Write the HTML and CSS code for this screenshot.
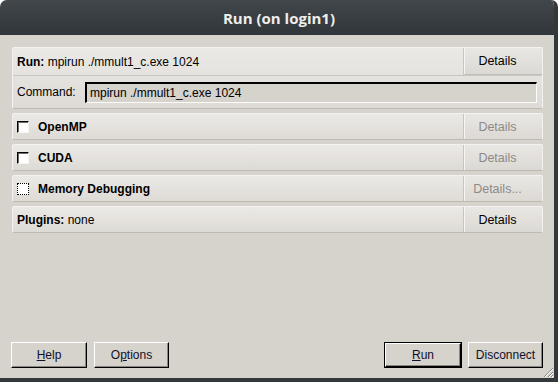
FILE: index.html
```html
<!DOCTYPE html>
<html>
<head>
<meta charset="utf-8">
<link rel="stylesheet" href="styles.css">
</head>
<body>
<div class="window">
  <div class="titlebar">Run (on login1)</div>
  <div class="body">
    <div class="panels">
      <div class="panel run-panel">
        <div class="row">
          <div class="label"><b>Run:</b> mpirun ./mmult1_c.exe 1024</div>
          <div class="details">Details</div>
        </div>
        <div class="command-row">
          <span class="cmd-label">Command:</span>
          <div class="input">mpirun ./mmult1_c.exe 1024</div>
        </div>
      </div>
      <div class="panel row">
        <div class="label"><span class="check"></span><b>OpenMP</b></div>
        <div class="details disabled">Details</div>
      </div>
      <div class="panel row">
        <div class="label"><span class="check"></span><b>CUDA</b></div>
        <div class="details disabled">Details</div>
      </div>
      <div class="panel row">
        <div class="label"><span class="check focus"></span><b>Memory Debugging</b></div>
        <div class="details disabled">Details...</div>
      </div>
      <div class="panel row">
        <div class="label"><b>Plugins:</b> none</div>
        <div class="details">Details</div>
      </div>
    </div>
    <div class="footer">
      <div class="group left">
        <div class="btn help"><u>H</u>elp</div>
        <div class="btn">O<u>p</u>tions</div>
      </div>
      <div class="group right">
        <div class="default"><div class="btn"><u>R</u>un</div></div>
        <div class="btn">Disconnect</div>
      </div>
    </div>
  </div>
  <svg class="grip" width="11" height="11" viewBox="0 0 11 11">
    <path d="M10 1 L1 10 M10 5 L5 10 M10 8 L8 10" stroke="#8a867f" stroke-width="1" fill="none"/>
    <path d="M10 2 L2 10 M10 6 L6 10 M10 9 L9 10" stroke="#ffffff" stroke-width="1" fill="none"/>
  </svg>
</div>
</body>
</html>
```

FILE: styles.css
```css
html, body {
  margin: 0;
  padding: 0;
  background: #ffffff;
}

.window {
  position: relative;
  width: 558px;
  height: 382px;
  box-sizing: border-box;
  border-right: 4px solid #33383a;
  border-bottom: 4px solid #33383a;
  border-radius: 7px 7px 0 0;
  background: #d6d2cc;
  display: flex;
  flex-direction: column;
  overflow: hidden;
  font-family: "Liberation Sans", Arial, sans-serif;
  font-size: 12px;
  color: #000;
}

.titlebar {
  height: 35px;
  flex: none;
  background: linear-gradient(#41474a, #2f3538);
  color: #eeeeec;
  font-family: "Open Sans", sans-serif;
  font-weight: bold;
  font-size: 15px;
  display: flex;
  align-items: center;
  justify-content: center;
  padding-left: 4px;
  box-sizing: border-box;
}

.body {
  flex: 1;
  display: flex;
  flex-direction: column;
  padding: 12px 11px 10px 12px;
}

.panels {
  display: flex;
  flex-direction: column;
  gap: 4px;
}

.panel {
  box-sizing: border-box;
  border: 1px solid #f3f2f0;
  border-bottom-color: #bdb9b3;
  border-radius: 2px;
  background: linear-gradient(#ebe9e6, #dedbd6);
}

.row {
  display: flex;
  align-items: stretch;
  height: 27px;
}

.run-panel {
  height: 62px;
}

.run-panel .row {
  height: 27px;
  border-bottom: 1px solid #c9c5bf;
}

.run-panel .row .details {
  border-bottom: 1px solid #c4c0ba;
}

.label {
  flex: 1;
  display: flex;
  align-items: center;
  padding-left: 4px;
  white-space: pre;
}

.details {
  width: 79px;
  box-sizing: border-box;
  border-left: 1px solid #c8c4be;
  box-shadow: inset 1px 0 #f6f5f3;
  background: linear-gradient(#e9e7e3, #dcd9d4);
  display: flex;
  align-items: center;
  justify-content: center;
  padding-right: 11px;
  font-size: 12.5px;
}

.details.disabled {
  color: #8c8a87;
}

.check {
  width: 12px;
  height: 12px;
  box-sizing: border-box;
  background: #fff;
  border-top: 1px solid #000;
  border-left: 1px solid #000;
  border-right: 1px solid #f4f4f4;
  border-bottom: 1px solid #f4f4f4;
  box-shadow: inset 1px 1px #6e6a64;
  margin-right: 9px;
  margin-top: 1px;
}

.check.focus {
  border: 1px dotted #000;
  box-shadow: none;
}

.command-row {
  display: flex;
  align-items: flex-start;
  padding: 6px 5px 0 4px;
}

.cmd-label {
  width: 68px;
  line-height: 21px;
}

.input {
  flex: 1;
  height: 21px;
  box-sizing: border-box;
  border-top: 2px solid #000;
  border-left: 2px solid #000;
  border-right: 1px solid #fbfbfa;
  border-bottom: 1px solid #fbfbfa;
  background: #d6d2cc;
  padding-left: 3px;
  line-height: 18px;
}

.footer {
  margin-top: auto;
  margin-left: -1px;
  display: flex;
  justify-content: space-between;
  align-items: flex-end;
}

.group {
  display: flex;
  align-items: flex-end;
}

.group.left {
  gap: 7px;
}

.group.right {
  gap: 6px;
}

.btn {
  width: 75px;
  height: 26px;
  box-sizing: border-box;
  border-top: 1px solid #ffffff;
  border-left: 1px solid #ffffff;
  border-right: 1px solid #000;
  border-bottom: 1px solid #000;
  box-shadow: inset -1px -1px #8a867f;
  background: #d6d2cc;
  display: flex;
  align-items: center;
  justify-content: center;
  color: #10102a;
}

.btn.help {
  width: 76px;
}

.default {
  border: 1px solid #000;
}

.default .btn {
  width: 76px;
  height: 24px;
}

.grip {
  position: absolute;
  right: 0;
  bottom: 0;
}
```
